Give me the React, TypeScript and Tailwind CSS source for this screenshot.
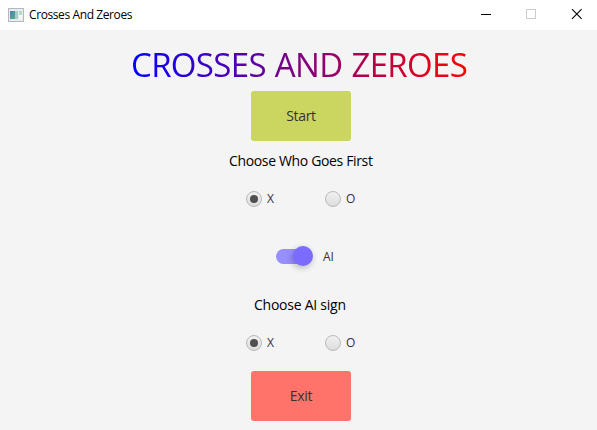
import { useState } from "react";

function AppIcon() {
  return (
    <svg width="16" height="14" viewBox="0 0 16 14" shapeRendering="crispEdges">
      <defs>
        <linearGradient id="pane" x1="0" y1="0" x2="1" y2="1">
          <stop offset="0" stopColor="#4a80b8" />
          <stop offset="1" stopColor="#5bb878" />
        </linearGradient>
      </defs>
      <rect x="0" y="0" width="16" height="14" fill="#b4b8c0" />
      <rect x="1" y="1" width="14" height="12" fill="#e9ebee" />
      <rect x="2" y="3" width="8" height="8" fill="url(#pane)" />
      <rect x="7" y="3" width="3" height="8" fill="#a5cfc6" />
      <rect x="11" y="3" width="3" height="8" fill="#f8f8f8" />
      <rect x="11" y="3" width="3" height="4" fill="#b9dac8" />
    </svg>
  );
}

function TitleBar() {
  return (
    <header className="flex h-[30px] items-start bg-white">
      <div className="flex h-[29px] flex-1 items-center pl-2">
        <AppIcon />
        <span className="ml-[5px] text-[12px] leading-4 tracking-[-0.4px] text-black">Crosses And Zeroes</span>
      </div>
      <svg width="137" height="30" viewBox="0 0 137 30" fill="none">
        <path d="M21 14.5H31" stroke="#000" />
        <rect x="66.5" y="9.5" width="9" height="9" stroke="#ccc" />
        <path d="M112 9.2L121.6 18.8M121.6 9.2L112 18.8" stroke="#000" strokeWidth="1.1" />
      </svg>
    </header>
  );
}

function Radio({ label, checked, onSelect }: { label: string; checked: boolean; onSelect: () => void }) {
  return (
    <button role="radio" aria-checked={checked} onClick={onSelect} className="flex h-4 items-center">
      <span className="flex size-4 items-center justify-center rounded-full border border-[#b9b9b9] bg-linear-to-b from-[#f1f1f1] to-[#dddddd]">
        {checked && <span className="size-2 rounded-full bg-[#505050]" />}
      </span>
      <span className="ml-[5px] text-[12px] leading-4 text-[#333]">{label}</span>
    </button>
  );
}

function SignChoice() {
  const [sign, setSign] = useState("X");
  return (
    <div role="radiogroup" className="ml-[246px] grid h-4 grid-cols-[79px_79px]">
      {["X", "O"].map((s) => (
        <Radio key={s} label={s} checked={sign === s} onSelect={() => setSign(s)} />
      ))}
    </div>
  );
}

function Toggle() {
  return (
    <div className="mt-[39px] ml-[276px] flex h-5 items-center">
      <span className="flex h-[15px] w-[37px] items-center justify-end rounded-full bg-linear-to-r from-[#988fff] from-85% to-transparent to-85%">
        <span className="size-5 shrink-0 rounded-full bg-[#7b6cff] shadow-[-1px_2px_6px_rgba(0,0,0,0.26)]" />
      </span>
      <span className="ml-[10px] pt-[2px] text-[12px] leading-4 text-[#333]">AI</span>
    </div>
  );
}

export default function App() {
  return (
    <div className="flex h-[430px] w-[597px] flex-col overflow-hidden bg-[#f4f4f4] font-['Open_Sans','Noto_Sans',sans-serif]">
      <TitleBar />
      <main className="flex flex-col">
        <h1 className="mt-[11px] ml-[131px] h-[50px] w-[338px] bg-linear-to-r/srgb from-[#0000ff] to-[#ff0000] bg-clip-text text-[33px] leading-[48px] font-normal tracking-[-0.65px] whitespace-nowrap text-transparent [word-spacing:1px]">
          CROSSES AND ZEROES
        </h1>
        <button className="ml-[251px] h-[50px] w-[100px] rounded-[3px] bg-[#cbd661] pb-[2px] text-[14px] tracking-[-0.3px] text-[#333]">Start</button>
        <p className="mt-[10px] mb-[20px] ml-[229px] h-5 text-[14px] leading-5 tracking-[-0.35px] whitespace-nowrap text-black">Choose Who Goes First</p>
        <SignChoice />
        <Toggle />
        <p className="mt-[29px] mb-[20px] ml-[254px] h-5 text-[14px] leading-5 tracking-[-0.25px] whitespace-nowrap text-black">Choose AI sign</p>
        <SignChoice />
        <button className="mt-5 ml-[251px] h-[50px] w-[100px] rounded-[3px] bg-[#ff736b] pb-[2px] text-[14px] tracking-[-0.3px] text-[#333]">Exit</button>
      </main>
    </div>
  );
}
